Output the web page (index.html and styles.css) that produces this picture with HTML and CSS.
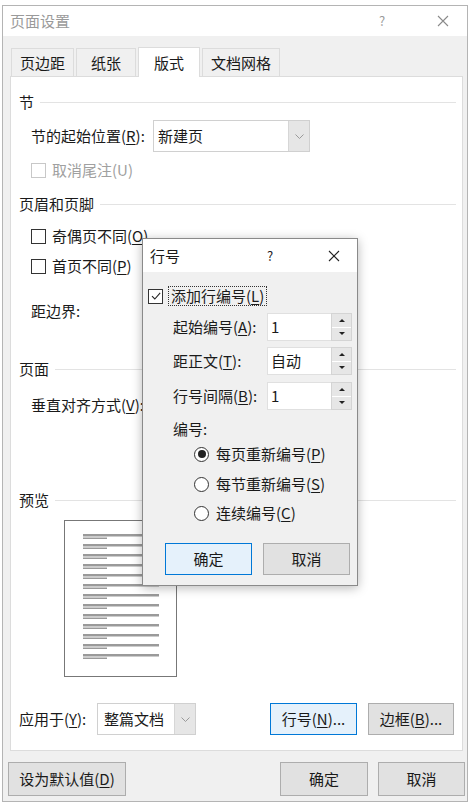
FILE: index.html
```html
<!DOCTYPE html>
<html lang="zh-CN">
<head>
<meta charset="utf-8">
<title>页面设置</title>
<link rel="stylesheet" href="styles.css">
</head>
<body>
<div class="window">
  <div class="titlebar">
    <span class="title">页面设置</span>
    <span class="tb-help">?</span>
    <span class="tb-close"><svg width="12" height="12" viewBox="0 0 12 12"><path d="M1 1L11 11M11 1L1 11" stroke="#8a8a8a" stroke-width="1.1" fill="none"/></svg></span>
  </div>
  <div class="tabs">
    <div class="tab t1">页边距</div>
    <div class="tab t2">纸张</div>
    <div class="tab active">版式</div>
    <div class="tab t4">文档网格</div>
  </div>
  <div class="panel">
    <div class="sec-head h-jie">节</div>
    <div class="row r-start">
      <span class="lbl lbl-start">节的起始位置(<u>R</u>):</span>
      <div class="select sel-start">
        <span class="sel-text">新建页</span>
        <span class="sel-arrow"><svg width="9" height="5" viewBox="0 0 9 5"><path d="M0.5 0.5L4.5 4.5L8.5 0.5" stroke="#9a9a9a" fill="none"/></svg></span>
      </div>
    </div>
    <div class="cb-row disabled r-endnote"><span class="cbox"></span><span>取消尾注(U)</span></div>
    <div class="sec-head h-hf">页眉和页脚</div>
    <div class="cb-row r-odd"><span class="cbox"></span><span>奇偶页不同(<u>O</u>)</span></div>
    <div class="cb-row r-first"><span class="cbox"></span><span>首页不同(<u>P</u>)</span></div>
    <div class="plain r-margin">距边界:</div>
    <div class="sec-head h-page">页面</div>
    <div class="plain r-valign">垂直对齐方式(<u>V</u>):</div>
    <div class="sec-head h-prev">预览</div>
    <div class="preview">
      <svg width="113" height="157" viewBox="0 0 113 157">
        <rect x="0.5" y="0.5" width="112" height="156" fill="#fff" stroke="#777"/>
        <g fill="#9a9a9a">
          <rect x="19" y="14" width="76" height="2.5"/><rect x="19" y="17.5" width="24" height="1.5"/>
          <rect x="19" y="24" width="76" height="2.5"/><rect x="19" y="27.5" width="24" height="1.5"/>
          <rect x="19" y="34" width="76" height="2.5"/><rect x="19" y="37.5" width="24" height="1.5"/>
          <rect x="19" y="44" width="76" height="2.5"/><rect x="19" y="47.5" width="24" height="1.5"/>
          <rect x="19" y="54" width="76" height="2.5"/><rect x="19" y="57.5" width="24" height="1.5"/>
          <rect x="19" y="64" width="76" height="2.5"/><rect x="19" y="67.5" width="24" height="1.5"/>
          <rect x="19" y="74" width="76" height="2.5"/><rect x="19" y="77.5" width="24" height="1.5"/>
          <rect x="19" y="84" width="76" height="2.5"/><rect x="19" y="87.5" width="24" height="1.5"/>
          <rect x="19" y="94" width="76" height="2.5"/><rect x="19" y="97.5" width="24" height="1.5"/>
          <rect x="19" y="104" width="76" height="2.5"/><rect x="19" y="107.5" width="24" height="1.5"/>
          <rect x="19" y="114" width="76" height="2.5"/><rect x="19" y="117.5" width="24" height="1.5"/>
          <rect x="19" y="124" width="76" height="2.5"/><rect x="19" y="127.5" width="24" height="1.5"/>
          <rect x="19" y="134" width="76" height="2.5"/><rect x="19" y="137.5" width="24" height="1.5"/>
        </g>
      </svg>
    </div>
    <div class="row r-apply">
      <span class="lbl lbl-apply">应用于(<u>Y</u>):</span>
      <div class="select sel-apply">
        <span class="sel-text">整篇文档</span>
        <span class="sel-arrow"><svg width="9" height="5" viewBox="0 0 9 5"><path d="M0.5 0.5L4.5 4.5L8.5 0.5" stroke="#9a9a9a" fill="none"/></svg></span>
      </div>
      <div class="btn focus b-line">行号(<u>N</u>)...</div>
      <div class="btn b-border">边框(<u>B</u>)...</div>
    </div>
  </div>
  <div class="footer">
    <div class="btn b-default">设为默认值(<u>D</u>)</div>
    <div class="btn b-ok">确定</div>
    <div class="btn b-cancel">取消</div>
  </div>
</div>

<div class="dlg">
  <div class="dlg-title">
    <span class="title dark">行号</span>
    <span class="dlg-help">?</span>
    <span class="dlg-close"><svg width="12" height="12" viewBox="0 0 12 12"><path d="M1 1L11 11M11 1L1 11" stroke="#222" stroke-width="1.1" fill="none"/></svg></span>
  </div>
  <div class="dlg-body">
    <div class="d-cb">
      <span class="cbox checked"><svg width="12" height="12" viewBox="0 0 12 12"><path d="M2 6.2L4.8 9L10.2 2.8" stroke="#222" stroke-width="1.1" fill="none"/></svg></span>
      <span class="focus-rect">添加行编号(<u>L</u>)</span>
    </div>
    <div class="d-field f1">
      <span class="d-lbl">起始编号(<u>A</u>):</span>
      <div class="spin-input">1</div>
      <div class="spin"><span class="sp-up"></span><span class="sp-down"></span></div>
    </div>
    <div class="d-field f2">
      <span class="d-lbl">距正文(<u>T</u>):</span>
      <div class="spin-input">自动</div>
      <div class="spin"><span class="sp-up"></span><span class="sp-down"></span></div>
    </div>
    <div class="d-field f3">
      <span class="d-lbl">行号间隔(<u>B</u>):</span>
      <div class="spin-input">1</div>
      <div class="spin"><span class="sp-up"></span><span class="sp-down"></span></div>
    </div>
    <div class="d-plain">编号:</div>
    <div class="d-radio r1"><span class="radio on"></span><span>每页重新编号(<u>P</u>)</span></div>
    <div class="d-radio r2"><span class="radio"></span><span>每节重新编号(<u>S</u>)</span></div>
    <div class="d-radio r3"><span class="radio"></span><span>连续编号(<u>C</u>)</span></div>
    <div class="d-btns">
      <div class="btn focus d-ok">确定</div>
      <div class="btn d-cancel">取消</div>
    </div>
  </div>
</div>
</body>
</html>
```
FILE: styles.css
```css
* { box-sizing: border-box; }
html, body { margin: 0; padding: 0; }
body {
  width: 473px;
  height: 808px;
  background: #ffffff;
  font-family: "Noto Sans CJK SC", "Noto Sans", sans-serif;
  font-size: 15px;
  line-height: 20px;
  color: #1a1a1a;
  position: relative;
  overflow: hidden;
}
u { text-decoration: underline; text-underline-offset: 2px; text-decoration-thickness: 1px; }

.window {
  margin: 5px 0 0 2px;
  width: 466px;
  height: 797px;
  border: 1px solid #b4b4b4;
  background: #f0f0f0;
  display: flex;
  flex-direction: column;
}
.titlebar {
  height: 30px;
  background: #ffffff;
  display: flex;
  align-items: center;
  padding-left: 7px;
  flex: none;
}
.title { color: #9a9a9a; font-size: 15px; }
.title.dark { color: #1a1a1a; }
.tb-help { margin-left: auto; color: #9a9a9a; font-size: 13px; width: 10px; }
.tb-close { margin-left: 48px; margin-right: 18px; display: flex; }

.tabs {
  display: flex;
  padding: 11px 0 0 8px;
  height: 40px;
  flex: none;
}
.tab {
  height: 29px;
  border: 1px solid #dcdcdc;
  border-bottom: none;
  background: #f0f0f0;
  display: flex;
  align-items: center;
  justify-content: center;
  margin-top: 1px;
  margin-right: 2px;
}
.t1 { width: 63px; }
.t2 { width: 60px; }
.tab.active { width: 62px; background: #ffffff; height: 30px; margin-top: 0; position: relative; }
.t4 { width: 78px; }

.panel {
  margin: 0 4px 0 7px;
  height: 675px;
  background: #ffffff;
  border: 1px solid #dcdcdc;
  flex: none;
}
.sec-head {
  display: flex;
  align-items: center;
  height: 20px;
  padding-left: 8px;
}
.sec-head::after {
  content: "";
  flex: 1;
  height: 1px;
  background: #e3e3e3;
  margin: 0 6px 0 6px;
}
.h-jie { margin-top: 15px; }
.h-hf { margin-top: 14px; }
.h-page { margin-top: 38px; }
.h-prev { margin-top: 75px; }

.row { display: flex; align-items: center; height: 32px; }
.r-start { margin-top: 8px; padding-left: 20px; }
.lbl-start { width: 122px; }
.select {
  height: 32px;
  border: 1px solid #d0d0d0;
  background: #fff;
  display: flex;
  align-items: center;
}
.sel-start { width: 157px; }
.sel-text { flex: 1; padding-left: 4px; }
.sel-arrow {
  width: 21px;
  height: 30px;
  background: #e6e6e6;
  border-left: 1px solid #d6d6d6;
  display: flex;
  align-items: center;
  justify-content: center;
}

.cb-row { display: flex; align-items: center; height: 20px; padding-left: 20px; }
.cb-row .cbox { margin-right: 6px; }
.cbox {
  width: 15px;
  height: 15px;
  border: 1px solid #333;
  background: #fff;
  display: inline-flex;
  align-items: center;
  justify-content: center;
  flex: none;
}
.disabled { color: #a0a0a0; }
.disabled .cbox { border-color: #c8c8c8; }
.r-endnote { margin-top: 8px; }
.r-odd { margin-top: 12px; }
.r-first { margin-top: 10px; }

.plain { height: 20px; padding-left: 20px; }
.r-margin { margin-top: 25px; }
.r-valign { margin-top: 16px; }

.preview { margin: 10px 0 0 53px; height: 157px; }
.preview svg { display: block; }

.r-apply { margin-top: 26px; padding-left: 8px; }
.lbl-apply { width: 78px; }
.sel-apply { width: 99px; }
.sel-apply .sel-text { padding-left: 6px; }

.btn {
  height: 32px;
  background: #e1e1e1;
  border: 1px solid #adadad;
  display: flex;
  align-items: center;
  justify-content: center;
  flex: none;
}
.btn.focus { background: #e5f1fb; border: 1px solid #0078d7; }
.b-line { width: 87px; margin-left: 74px; }
.b-border { width: 86px; margin-left: 11px; }

.footer {
  display: flex;
  margin-top: 11px;
  padding-left: 5px;
}
.footer .btn { height: 34px; }
.b-default { width: 118px; }
.b-ok { width: 88px; margin-left: 154px; }
.b-cancel { width: 87px; margin-left: 10px; }

/* overlay dialog */
.dlg {
  position: absolute;
  left: 142px;
  top: 238px;
  width: 216px;
  height: 348px;
  border: 1px solid #8a8a8a;
  background: #f0f0f0;
  box-shadow: 0 2px 10px rgba(0, 0, 0, 0.28);
  display: flex;
  flex-direction: column;
}
.dlg-title {
  height: 33px;
  background: #ffffff;
  display: flex;
  align-items: center;
  padding-left: 7px;
  flex: none;
}
.dlg-help { margin-left: 87px; font-size: 13px; color: #222; }
.dlg-close { margin-left: 55px; display: flex; }
.dlg-body { padding-left: 5px; }
.d-cb { display: flex; align-items: center; height: 20px; margin-top: 14px; }
.d-cb .cbox { margin-right: 5px; border-color: #333; }
.focus-rect { border: 1px dotted #333; padding: 0 2px; line-height: 18px; }
.d-field { display: flex; align-items: center; height: 28px; padding-left: 25px; }
.f1 { margin-top: 7px; }
.f2 { margin-top: 6px; }
.f3 { margin-top: 7px; }
.d-lbl { width: 94px; }
.spin-input {
  width: 64px;
  height: 28px;
  background: #fff;
  border: 1px solid #e0e0e0;
  border-right: none;
  padding-left: 3px;
  display: flex;
  align-items: center;
}
.spin {
  width: 21px;
  height: 28px;
  display: flex;
  flex-direction: column;
  border: 1px solid #d4d4d4;
  background: #fff;
}
.spin span {
  flex: 1;
  background: #e6e6e6;
  display: flex;
  align-items: center;
  justify-content: center;
}
.spin .sp-up { border-bottom: 1px solid #fff; }
.sp-up::before {
  content: "";
  border-left: 3px solid transparent;
  border-right: 3px solid transparent;
  border-bottom: 3px solid #222;
}
.sp-down::before {
  content: "";
  border-left: 3px solid transparent;
  border-right: 3px solid transparent;
  border-top: 3px solid #222;
}
.d-plain { height: 20px; padding-left: 25px; margin-top: 9px; }
.d-radio { display: flex; align-items: center; height: 20px; padding-left: 46px; }
.r1 { margin-top: 5px; }
.r2 { margin-top: 10px; }
.r3 { margin-top: 9px; }
.radio {
  width: 15px;
  height: 15px;
  border: 1px solid #333;
  border-radius: 50%;
  background: #fff;
  margin-right: 7px;
  flex: none;
  display: flex;
  align-items: center;
  justify-content: center;
}
.radio.on::before {
  content: "";
  width: 8px;
  height: 8px;
  border-radius: 50%;
  background: #222;
}
.d-btns { display: flex; margin-top: 20px; padding-left: 17px; }
.d-ok { width: 87px; }
.d-cancel { width: 87px; margin-left: 11px; }
```
